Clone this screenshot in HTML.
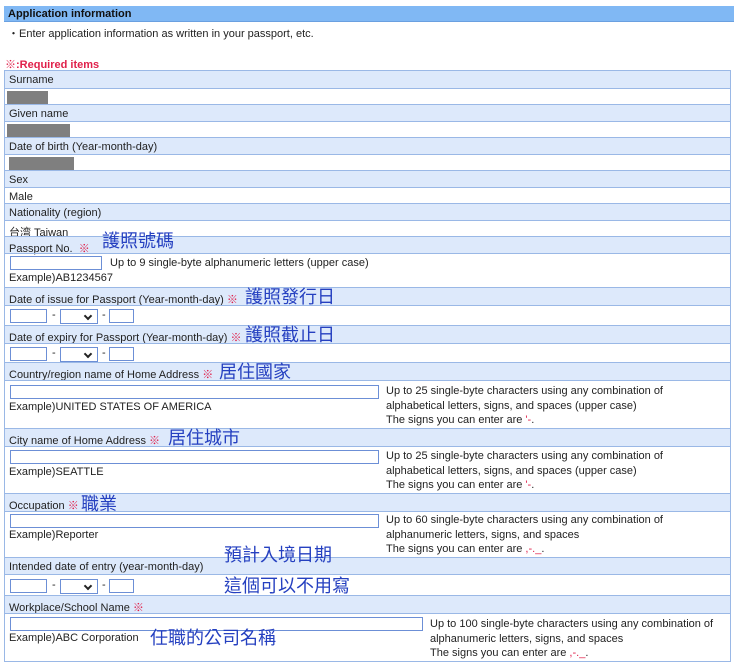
<!DOCTYPE html>
<html><head><meta charset="utf-8"><style>
*{box-sizing:border-box;margin:0;padding:0}
body{width:740px;height:669px;background:#fff;font-family:"Liberation Sans","Noto Sans CJK TC",sans-serif;font-size:11px;color:#222;position:relative;overflow:hidden}
.a{position:absolute}
.hdr{left:4px;top:6px;width:730px;height:16px;background:#80b8f4;border-bottom:1px solid #6aa0e0;font-weight:bold;font-size:11px;padding:2px 0 0 4px;color:#111}
.tbl{left:4px;top:70px;width:727px;height:592px;border:1px solid #9ab8e6;}
.r{position:absolute;left:0;width:725px;border-top:1px solid #9ab8e6;padding:3px 0 0 4px}
.L{background:#dde9fb}
.g{position:absolute;background:#7f7f7f;height:13px;top:2px}
.in{position:absolute;border:1px solid #6c8fd6;background:#fff;height:14px}
.sel{position:absolute;border:1px solid #6c8fd6;background:#fff;height:15px;width:38px}
.sel:after{content:"";position:absolute;right:6px;top:3px;width:4px;height:4px;border-right:2px solid #222;border-bottom:2px solid #222;transform:rotate(45deg)}
.red{color:#e0204a;font-weight:bold}
.zh{position:absolute;color:#2540c0;font-size:18px;font-family:"Noto Sans CJK TC","WenQuanYi Zen Hei",sans-serif;line-height:20px}
.d{position:absolute;font-size:11px}
.t{position:absolute;line-height:14.5px}
</style></head><body>
<div class="a hdr">Application information</div>
<div class="a" style="left:8px;top:25px">・Enter application information as written in your passport, etc.</div>
<div class="a red" style="left:5px;top:56px;font-weight:bold">※:Required items</div>
<div class="a tbl">
<div class="r L" style="top:0;height:18px;border-top:none">Surname</div>
<div class="r" style="top:17px;height:17px"><div class="g" style="left:2px;width:41px"></div></div>
<div class="r L" style="top:33px;height:17px">Given name</div>
<div class="r" style="top:50px;height:17px"><div class="g" style="left:2px;width:63px"></div></div>
<div class="r L" style="top:66px;height:17px">Date of birth (Year-month-day)</div>
<div class="r" style="top:83px;height:17px"><div class="g" style="left:4px;width:65px"></div></div>
<div class="r L" style="top:99px;height:17px">Sex</div>
<div class="r" style="top:116px;height:17px">Male</div>
<div class="r L" style="top:132px;height:17px">Nationality (region)</div>
<div class="r" style="top:149px;height:17px">台湾 Taiwan</div>
<div class="r L" style="top:165px;height:17px">Passport No. &nbsp;<span class="red">※</span></div>
<div class="r" style="top:182px;height:34px"><div class="in" style="left:5px;top:2px;width:92px"></div><div class="t" style="left:105px;top:2px">Up to 9 single-byte alphanumeric letters (upper case)</div><div class="t" style="left:4px;top:17px">Example)AB1234567</div></div>
<div class="r L" style="top:216px;height:18px">Date of issue for Passport (Year-month-day) <span class="red">※</span></div>
<div class="r" style="top:234px;height:20px"><div class="in" style="left:5px;top:3px;width:37px"></div><div class="d" style="left:47px;top:3px">-</div><div class="sel" style="left:55px;top:3px"></div><div class="d" style="left:97px;top:3px">-</div><div class="in" style="left:104px;top:3px;width:25px"></div></div>
<div class="r L" style="top:254px;height:18px">Date of expiry for Passport (Year-month-day) <span class="red">※</span></div>
<div class="r" style="top:272px;height:19px"><div class="in" style="left:5px;top:3px;width:37px"></div><div class="d" style="left:47px;top:3px">-</div><div class="sel" style="left:55px;top:3px"></div><div class="d" style="left:97px;top:3px">-</div><div class="in" style="left:104px;top:3px;width:25px"></div></div>
<div class="r L" style="top:291px;height:18px">Country/region name of Home Address <span class="red">※</span></div>
<div class="r" style="top:309px;height:48px"><div class="in" style="left:5px;top:4px;width:369px"></div><div class="t" style="left:4px;top:19px">Example)UNITED STATES OF AMERICA</div><div class="t" style="left:381px;top:3px">Up to 25 single-byte characters using any combination of<br>alphabetical letters, signs, and spaces (upper case)<br>The signs you can enter are <span class="red" style="font-weight:normal">'-</span>.</div></div>
<div class="r L" style="top:357px;height:18px">City name of Home Address <span class="red">※</span></div>
<div class="r" style="top:375px;height:47px"><div class="in" style="left:5px;top:3px;width:369px"></div><div class="t" style="left:4px;top:18px">Example)SEATTLE</div><div class="t" style="left:381px;top:2px">Up to 25 single-byte characters using any combination of<br>alphabetical letters, signs, and spaces (upper case)<br>The signs you can enter are <span class="red" style="font-weight:normal">'-</span>.</div></div>
<div class="r L" style="top:422px;height:18px">Occupation <span class="red">※</span></div>
<div class="r" style="top:440px;height:46px"><div class="in" style="left:5px;top:2px;width:369px"></div><div class="t" style="left:4px;top:16px">Example)Reporter</div><div class="t" style="left:381px;top:1px">Up to 60 single-byte characters using any combination of<br>alphanumeric letters, signs, and spaces<br>The signs you can enter are <span class="red" style="font-weight:normal">,-._</span>.</div></div>
<div class="r L" style="top:486px;height:17px">Intended date of entry (year-month-day)</div>
<div class="r" style="top:503px;height:21px"><div class="in" style="left:5px;top:4px;width:37px"></div><div class="d" style="left:47px;top:4px">-</div><div class="sel" style="left:55px;top:4px"></div><div class="d" style="left:97px;top:4px">-</div><div class="in" style="left:104px;top:4px;width:25px"></div></div>
<div class="r L" style="top:524px;height:18px">Workplace/School Name <span class="red">※</span></div>
<div class="r" style="top:542px;height:49px"><div class="in" style="left:5px;top:3px;width:413px"></div><div class="t" style="left:4px;top:17px">Example)ABC Corporation</div><div class="t" style="left:425px;top:3px">Up to 100 single-byte characters using any combination of<br>alphanumeric letters, signs, and spaces<br>The signs you can enter are <span class="red" style="font-weight:normal">,-._</span>.</div></div>
</div>
<div class="zh" style="left:102px;top:230px">護照號碼</div>
<div class="zh" style="left:245px;top:286px">護照發行日</div>
<div class="zh" style="left:245px;top:324px">護照截止日</div>
<div class="zh" style="left:219px;top:361px">居住國家</div>
<div class="zh" style="left:168px;top:427px">居住城市</div>
<div class="zh" style="left:81px;top:493px">職業</div>
<div class="zh" style="left:224px;top:544px">預計入境日期</div>
<div class="zh" style="left:224px;top:575px">這個可以不用寫</div>
<div class="zh" style="left:150px;top:627px">任職的公司名稱</div>
</body></html>
